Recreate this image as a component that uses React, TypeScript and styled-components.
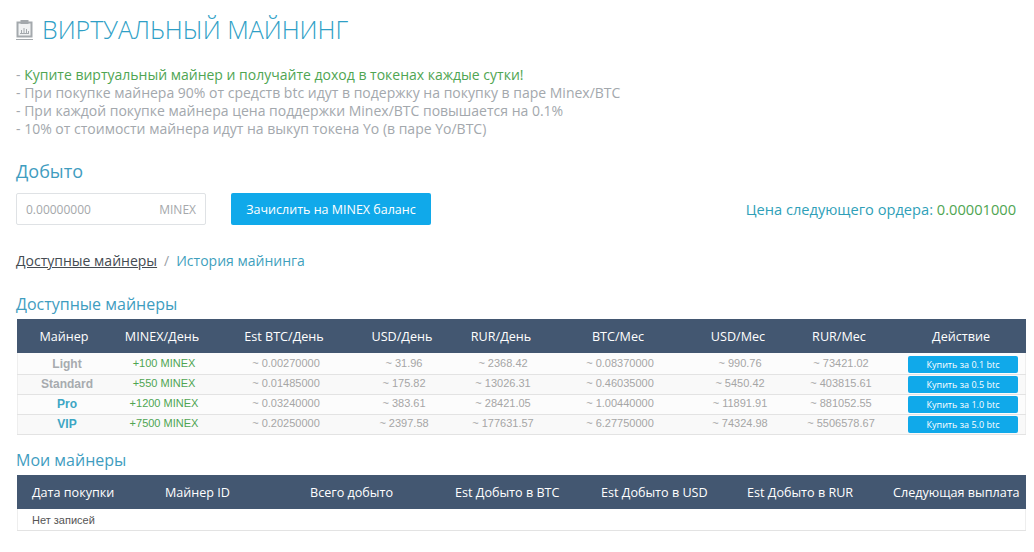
import React from 'react';
import styled, { createGlobalStyle } from 'styled-components';

const GlobalStyle = createGlobalStyle`
    html, body {
        margin: 0;
        padding: 0;
        background: #fff;
    }
    body {
        font-family: "Open Sans", "Liberation Sans", sans-serif;
    }
`;

const Page = styled.div`
    width: 1034px;
    height: 552px;
    overflow: hidden;
    box-sizing: border-box;
    padding: 12px 8px 0 16px;
`;

const TitleRow = styled.div`
    display: flex;
    align-items: center;
    gap: 8px;
    height: 34px;
`;

const Title = styled.h1`
    margin: 0;
    font-size: 24.95px;
    font-weight: 300;
    line-height: 34px;
    color: #2f9fc6;
`;

const Notes = styled.div`
    margin-top: 20px;
    font-size: 14px;
    line-height: 18px;
    color: #a3a8ad;
`;

const GreenText = styled.span`
    color: #4fa552;
`;

const SectionTitle = styled.h2`
    margin: 0;
    font-size: 18px;
    font-weight: 400;
    line-height: 24px;
    color: #3f9dbf;
`;

const MinedTitle = styled(SectionTitle)`
    margin-top: 21px;
`;

const MinedRow = styled.div`
    display: flex;
    align-items: center;
    margin-top: 10px;
    height: 32px;
`;

const AmountBox = styled.div`
    box-sizing: border-box;
    width: 190px;
    height: 32px;
    display: flex;
    align-items: center;
    justify-content: space-between;
    padding: 0 9px;
    border: 1px solid #dfe2e5;
    border-radius: 2px;
    font-size: 12px;
    color: #a5a8ab;
`;

const CreditButton = styled.button`
    margin-left: 25px;
    width: 200px;
    height: 32px;
    border: none;
    border-radius: 2px;
    background: #10a9ea;
    color: #fff;
    font-family: inherit;
    font-size: 12.5px;
    font-weight: 500;
    padding: 0;
`;

const NextPrice = styled.div`
    margin-left: auto;
    padding-right: 10px;
    font-size: 14.65px;
    color: #2f9fb8;
`;

const Tabs = styled.div`
    margin-top: 24px;
    font-size: 14px;
    line-height: 24px;
    display: flex;
    gap: 7px;
`;

const ActiveTab = styled.span`
    color: #444b52;
    text-decoration: underline;
`;

const TabDivider = styled.span`
    color: #9aa0a6;
`;

const TabLink = styled.span`
    color: #3f9fbd;
`;

const TableTitle = styled.h3<{ $top: number }>`
    margin: ${(p) => p.$top}px 0 0;
    font-size: 16px;
    font-weight: 400;
    line-height: 24px;
    color: #3f9dbf;
`;

const Table = styled.div<{ $top: number }>`
    width: 1009px;
    margin: ${(p) => p.$top}px 0 0 1px;
`;

const HeadRow = styled.div<{ $cols: string }>`
    display: grid;
    grid-template-columns: ${(p) => p.$cols};
    height: 34px;
    align-items: center;
    background: #435771;
    color: #fff;
    font-size: 12.6px;
`;

const HeadCell = styled.div`
    text-align: center;
    padding-right: 4px;
`;

const ActionHead = styled.div`
    text-align: center;
    padding-left: 11px;
`;

const LeftHead = styled.div`
    padding-left: 15px;
    white-space: nowrap;
`;

const Row = styled.div<{ $cols: string; $striped: boolean }>`
    display: grid;
    grid-template-columns: ${(p) => p.$cols};
    grid-template-rows: 17px;
    height: 20px;
    padding-bottom: 2px;
    align-items: center;
    box-sizing: border-box;
    border-bottom: 1px solid #e3e3e3;
    box-shadow: inset 1px 0 #eeeeee, inset -1px 0 #eeeeee;
    background: ${(p) => (p.$striped ? '#f9f9f9' : '#fcfcfc')};
    font-family: "Liberation Sans", Arial, sans-serif;
    font-size: 11px;
    line-height: 13px;
    color: #a6a6a6;
    ${HeadRow} + & {
        height: 22px;
        padding-top: 2px;
    }
`;

const Cell = styled.div`
    text-align: center;
    white-space: nowrap;
`;

const MinerName = styled(Cell)<{ $paid: boolean }>`
    padding: 2px 0 0 2px;
    font-size: 12px;
    font-weight: 700;
    color: ${(p) => (p.$paid ? '#3da6c4' : '#a7abaf')};
`;

const MinexCell = styled(Cell)`
    color: #4fa552;
`;

const ActionCell = styled.div`
    display: flex;
    align-self: start;
    justify-content: flex-end;
    padding: 1px 8px 0 0;
`;

const BuyButton = styled.button`
    width: 110px;
    height: 17px;
    padding: 0;
    border: none;
    border-radius: 2px;
    background: #10a9ea;
    color: #fff;
    font-family: "Open Sans", sans-serif;
    font-size: 9px;
    font-weight: 400;
`;

const EmptyRow = styled.div`
    height: 21px;
    line-height: 22px;
    padding-left: 15px;
    border-bottom: 1px solid #e3e3e3;
    box-shadow: inset 1px 0 #eeeeee, inset -1px 0 #eeeeee;
    font-family: "Liberation Sans", Arial, sans-serif;
    font-size: 11px;
    color: #555;
`;

const minerCols = '98px 98px 146px 90px 108px 126px 114px 88px 141px';
const myCols = '133px 145px 145px 146px 146px 146px 148px';

const minerHeads = ['Майнер', 'MINEX/День', 'Est BTC/День', 'USD/День', 'RUR/День', 'BTC/Мес', 'USD/Мес', 'RUR/Мес'];

const myHeads = ['Дата покупки', 'Майнер ID', 'Всего добыто', 'Est Добыто в BTC', 'Est Добыто в USD', 'Est Добыто в RUR', 'Следующая выплата'];

const miners = [
    { name: 'Light', minex: '+100 MINEX', paid: false, price: '0.1', values: ['~ 0.00270000', '~ 31.96', '~ 2368.42', '~ 0.08370000', '~ 990.76', '~ 73421.02'] },
    { name: 'Standard', minex: '+550 MINEX', paid: false, price: '0.5', values: ['~ 0.01485000', '~ 175.82', '~ 13026.31', '~ 0.46035000', '~ 5450.42', '~ 403815.61'] },
    { name: 'Pro', minex: '+1200 MINEX', paid: true, price: '1.0', values: ['~ 0.03240000', '~ 383.61', '~ 28421.05', '~ 1.00440000', '~ 11891.91', '~ 881052.55'] },
    { name: 'VIP', minex: '+7500 MINEX', paid: true, price: '5.0', values: ['~ 0.20250000', '~ 2397.58', '~ 177631.57', '~ 6.27750000', '~ 74324.98', '~ 5506578.67'] },
];

function ReportIcon() {
    return (
        <svg width="18" height="21" viewBox="0 0 18 21" fill="none" stroke="#a4a9ad">
            <rect x="1.5" y="3.5" width="14" height="14" fill="#f1f3f4" strokeWidth="2" />
            <rect x="5" y="1.5" width="7" height="3" fill="#a4a9ad" strokeWidth="1" />
            <path d="M4 14.5h9M5.5 14v-3M8 14V9M10.5 14v-4M12.5 14v-2" strokeWidth="1" />
            <path d="M0 20.5h17" strokeWidth="1" />
        </svg>
    );
}

export default function App() {
    return (
        <Page>
            <GlobalStyle />
            <TitleRow>
                <ReportIcon />
                <Title>ВИРТУАЛЬНЫЙ МАЙНИНГ</Title>
            </TitleRow>

            <Notes>
                <div>- <GreenText>Купите виртуальный майнер и получайте доход в токенах каждые сутки!</GreenText></div>
                <div>- При покупке майнера 90% от средств btc идут в подержку на покупку в паре Minex/BTC</div>
                <div>- При каждой покупке майнера цена поддержки Minex/BTC повышается на 0.1%</div>
                <div>- 10% от стоимости майнера идут на выкуп токена Yo (в паре Yo/BTC)</div>
            </Notes>

            <MinedTitle>Добыто</MinedTitle>
            <MinedRow>
                <AmountBox>
                    <span>0.00000000</span>
                    <span>MINEX</span>
                </AmountBox>
                <CreditButton>Зачислить на MINEX баланс</CreditButton>
                <NextPrice>
                    Цена следующего ордера: <GreenText>0.00001000</GreenText>
                </NextPrice>
            </MinedRow>

            <Tabs>
                <ActiveTab>Доступные майнеры</ActiveTab>
                <TabDivider>/</TabDivider>
                <TabLink>История майнинга</TabLink>
            </Tabs>

            <TableTitle $top={19}>Доступные майнеры</TableTitle>
            <Table $top={3}>
                <HeadRow $cols={minerCols}>
                    {minerHeads.map((h) => (
                        <HeadCell key={h}>{h}</HeadCell>
                    ))}
                    <ActionHead>Действие</ActionHead>
                </HeadRow>
                {miners.map((m, i) => (
                    <Row key={m.name} $cols={minerCols} $striped={i % 2 === 1}>
                        <MinerName $paid={m.paid}>{m.name}</MinerName>
                        <MinexCell>{m.minex}</MinexCell>
                        {m.values.map((v) => (
                            <Cell key={v}>{v}</Cell>
                        ))}
                        <ActionCell>
                            <BuyButton>Купить за {m.price} btc</BuyButton>
                        </ActionCell>
                    </Row>
                ))}
            </Table>

            <TableTitle $top={13}>Мои майнеры</TableTitle>
            <Table $top={3}>
                <HeadRow $cols={myCols}>
                    {myHeads.map((h) => (
                        <LeftHead key={h}>{h}</LeftHead>
                    ))}
                </HeadRow>
                <EmptyRow>Нет записей</EmptyRow>
            </Table>
        </Page>
    );
}
